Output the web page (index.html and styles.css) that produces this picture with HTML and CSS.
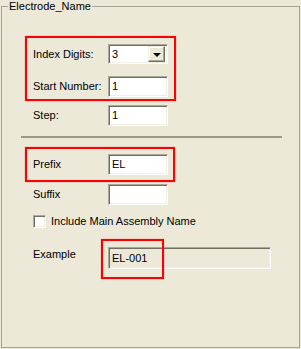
FILE: index.html
```html
<!DOCTYPE html>
<html lang="en">
<head>
    <meta charset="UTF-8">
    <title>Electrode Name</title>
    <link rel="stylesheet" href="styles.css">
</head>
<body>
    <div class="group">
        <span class="legend">Electrode_Name</span>

        <div class="row row-digits">
            <label class="label">Index Digits:</label>
            <div class="combo">
                <span class="combo-value">3</span>
                <span class="combo-btn"><span class="arrow"></span></span>
            </div>
        </div>
        <div class="row row-start">
            <label class="label">Start Number:</label>
            <div class="field">1</div>
        </div>
        <div class="row row-step">
            <label class="label">Step:</label>
            <div class="field">1</div>
        </div>

        <div class="separator"></div>

        <div class="row row-prefix">
            <label class="label">Prefix</label>
            <div class="field">EL</div>
        </div>
        <div class="row row-suffix">
            <label class="label">Suffix</label>
            <div class="field"></div>
        </div>
        <div class="row row-check">
            <span class="checkbox"></span>
            <label>Include Main Assembly Name</label>
        </div>
        <div class="row row-example">
            <label class="label">Example</label>
            <div class="field readonly">EL-001</div>
        </div>

        <div class="mark mark-index"></div>
        <div class="mark mark-prefix"></div>
        <div class="mark mark-example"></div>
    </div>
</body>
</html>
```

FILE: styles.css
```css
body {
    margin: 0;
    background: #ece9d8;
    font-family: "Liberation Sans", Arial, sans-serif;
    font-size: 11px;
    color: #000;
}
.group {
    position: relative;
    margin: 6px 1px 0 1px;
    height: 342px;
    box-sizing: border-box;
    border: 1px solid #a5a397;
    padding: 37px 0 0 31px;
}
.legend {
    position: absolute;
    top: -7px;
    left: 6px;
    padding: 0 1px;
    line-height: 13px;
    background: #ece9d8;
}
.row {
    display: flex;
    align-items: center;
}
.label {
    width: 75px;
    line-height: 13px;
}
.row-start { margin-top: 12px; }
.row-step { margin-top: 8px; }
.row-prefix { margin-top: 16px; }
.row-suffix { margin-top: 9px; }
.row-check { margin-top: 10px; }
.row-example {
    margin-top: 19px;
    align-items: flex-start;
}
.row-example .label {
    margin-top: 1px;
}
.field, .combo {
    box-sizing: border-box;
    width: 60px;
    height: 21px;
    background: #fff;
    border-top: 1px solid #aca899;
    border-left: 1px solid #aca899;
    border-right: 1px solid #fff;
    border-bottom: 1px solid #fff;
    box-shadow: inset 1px 1px 0 #716f64, inset -1px -1px 0 #f1efe2;
    padding: 0 0 0 3px;
    line-height: 19px;
}
.combo {
    height: 20px;
    display: flex;
    align-items: center;
    justify-content: space-between;
    padding: 2px 2px 2px 3px;
}
.combo-btn {
    box-sizing: border-box;
    width: 17px;
    height: 16px;
    background: #ece9d8;
    border-top: 1px solid #f1efe2;
    border-left: 1px solid #f1efe2;
    border-right: 1px solid #716f64;
    border-bottom: 1px solid #716f64;
    box-shadow: inset -1px -1px 0 #aca899, inset 1px 1px 0 #fff;
    display: flex;
    align-items: center;
    justify-content: center;
}
.arrow {
    width: 0;
    height: 0;
    border-left: 4px solid transparent;
    border-right: 4px solid transparent;
    border-top: 4px solid #000;
    margin-top: 1px;
}
.separator {
    margin: 10px 0 0 -12px;
    width: 261px;
    height: 2px;
    background: #9a988c;
}
.checkbox {
    box-sizing: border-box;
    width: 13px;
    height: 13px;
    margin-right: 5px;
    background: #fff;
    border-top: 1px solid #aca899;
    border-left: 1px solid #aca899;
    border-right: 1px solid #fff;
    border-bottom: 1px solid #fff;
    box-shadow: inset 1px 1px 0 #716f64, inset -1px -1px 0 #f1efe2;
}
.row-check label {
    line-height: 13px;
}
.field.readonly {
    width: 163px;
    height: 22px;
    background: #ece9d8;
    line-height: 20px;
}
.mark {
    position: absolute;
    box-sizing: border-box;
    border: 2px solid #ff0000;
    box-shadow: 0 0 1px rgba(255, 0, 0, 0.6);
}
.mark-index {
    left: 23px;
    top: 29px;
    width: 151px;
    height: 65px;
}
.mark-prefix {
    left: 23px;
    top: 140px;
    width: 150px;
    height: 35px;
}
.mark-example {
    left: 99px;
    top: 232px;
    width: 63px;
    height: 40px;
}
```
